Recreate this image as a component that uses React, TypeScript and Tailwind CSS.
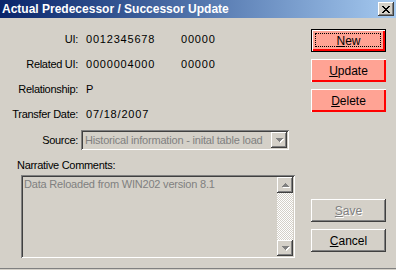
import React from "react";

const font = "font-['Liberation_Sans',Arial,sans-serif]";

const raised =
  "shadow-[inset_-1px_-1px_#404040,inset_1px_1px_#ffffff,inset_-2px_-2px_#808080,inset_2px_2px_#d4d0c8]";
const sunken =
  "shadow-[inset_1px_1px_#808080,inset_-1px_-1px_#ffffff,inset_2px_2px_#404040,inset_-2px_-2px_#d4d0c8]";

function Field({ label, value, extra }: { label: string; value: string; extra?: string }) {
  return (
    <div className="flex items-center h-[25px]">
      <span className="w-[78px] text-right tracking-[-0.3px]">{label}</span>
      <span className="ml-[8px] w-[95px] tracking-[0.8px]">{value}</span>
      {extra && <span className="tracking-[0.8px]">{extra}</span>}
    </div>
  );
}

function RedButton({ letter, rest, isDefault }: { letter: string; rest: string; isDefault?: boolean }) {
  return (
    <div
      className={`relative h-[23px] w-[75px] bg-[#ffa394] flex items-center justify-center text-[12px] ${
        isDefault
          ? "shadow-[inset_1px_1px_#000,inset_-1px_-1px_#000,inset_2px_2px_#fff,inset_-2px_-2px_#ff0000,inset_-3px_-3px_#ff0000]"
          : "shadow-[inset_1px_1px_#fff,inset_-1px_-1px_#ff0000,inset_-2px_-2px_#ff0000]"
      }`}
    >
      {isDefault && (
        <div className="absolute left-[4px] top-[4px] right-[5px] bottom-[5px] border border-dotted border-black" />
      )}
      <span>
        <span className="underline">{letter}</span>
        {rest}
      </span>
    </div>
  );
}

function GreyButton({ letter, rest, disabled }: { letter: string; rest: string; disabled?: boolean }) {
  return (
    <div
      className={`h-[23px] w-[75px] bg-[#d4d0c8] flex items-center justify-center text-[12px] ${raised} ${
        disabled ? "text-[#808080] [text-shadow:1px_1px_#ffffff]" : "text-black"
      }`}
    >
      <span>
        <span className="underline">{letter}</span>
        {rest}
      </span>
    </div>
  );
}

function Arrow({ up }: { up?: boolean }) {
  return (
    <svg width="7" height="4" viewBox="0 0 7 4" className="overflow-visible">
      {up ? (
        <>
          <path d="M1 5h7v-1h-1v-1h-1v-1h-1v-1h-1v1h-1v1h-1v1h-1z" fill="#ffffff" />
          <path d="M0 4h7v-1h-1v-1h-1v-1h-1v-1h-1v1h-1v1h-1v1h-1z" fill="#808080" />
        </>
      ) : (
        <>
          <path d="M1 1h7v1h-1v1h-1v1h-1v1h-1v-1h-1v-1h-1v-1h-1z" fill="#ffffff" />
          <path d="M0 0h7v1h-1v1h-1v1h-1v1h-1v-1h-1v-1h-1v-1h-1z" fill="#808080" />
        </>
      )}
    </svg>
  );
}

export default function App() {
  return (
    <div className={`w-[396px] h-[270px] bg-[#d4d0c8] flex flex-col text-[11px] text-black ${font}`}>
      <div className="h-[18px] flex items-center justify-between bg-gradient-to-r from-[#0a246a] to-[#a6caf0] pl-[2px] pr-[2px]">
        <span className="text-white font-bold text-[12px]">
          Actual Predecessor / Successor Update
        </span>
        <div className={`w-[16px] h-[14px] bg-[#d4d0c8] flex items-center justify-center ${raised}`}>
          <svg width="8" height="7" viewBox="0 0 8 7">
            <path d="M0 0h2v1h1v1h2v-1h1v-1h2v1h-1v1h-1v1h-1v1h1v1h1v1h1v1h-2v-1h-1v-1h-2v1h-1v1h-2v-1h1v-1h1v-1h1v-1h-1v-1h-1v-1h-1z" fill="#000" />
          </svg>
        </div>
      </div>

      <div className="flex-1 flex">
        <div className="w-[311px] flex flex-col pt-[9px]">
          <Field label="UI:" value="0012345678" extra="00000" />
          <Field label="Related UI:" value="0000004000" extra="00000" />
          <Field label="Relationship:" value="P" />
          <Field label="Transfer Date:" value="07/18/2007" />

          <div className="flex items-center h-[20px] mt-[3px]">
            <span className="w-[78px] text-right tracking-[-0.3px]">Source:</span>
            <div className={`ml-[3px] w-[208px] h-[20px] bg-[#d4d0c8] flex items-center pl-[4px] pr-[2px] ${sunken}`}>
              <span className="flex-1 text-[#808080] tracking-[-0.2px] whitespace-nowrap overflow-hidden">
                Historical information - inital table load
              </span>
              <div className={`w-[16px] h-[16px] flex items-center justify-center ${raised}`}>
                <Arrow />
              </div>
            </div>
          </div>

          <div className="ml-[17px] mt-[9px] leading-[13px] tracking-[-0.3px]">Narrative Comments:</div>
          <div className={`ml-[21px] mt-[3px] w-[274px] h-[83px] bg-[#d4d0c8] flex p-[2px] ${sunken}`}>
            <div className="flex-1 text-[#808080] pl-[1px] pt-[1px] leading-[13px] tracking-[-0.2px]">
              Data Reloaded from WIN202 version 8.1
            </div>
            <div className="w-[16px] flex flex-col">
              <div className={`h-[16px] bg-[#d4d0c8] flex items-center justify-center ${raised}`}>
                <Arrow up />
              </div>
              <div className="flex-1 bg-[repeating-conic-gradient(#ffffff_0_25%,#d4d0c8_0_50%)] bg-[length:2px_2px]" />
              <div className={`h-[16px] bg-[#d4d0c8] flex items-center justify-center ${raised}`}>
                <Arrow />
              </div>
            </div>
          </div>
        </div>

        <div className="flex flex-col pt-[11px] gap-[7px]">
          <RedButton letter="N" rest="ew" isDefault />
          <RedButton letter="U" rest="pdate" />
          <RedButton letter="D" rest="elete" />
          <div className="mt-[80px]">
            <GreyButton letter="S" rest="ave" disabled />
          </div>
          <GreyButton letter="C" rest="ancel" />
        </div>
      </div>

      <div className="h-[1px] bg-[#808080]" />
      <div className="h-[1px] bg-[#d4d0c8]" />
    </div>
  );
}
